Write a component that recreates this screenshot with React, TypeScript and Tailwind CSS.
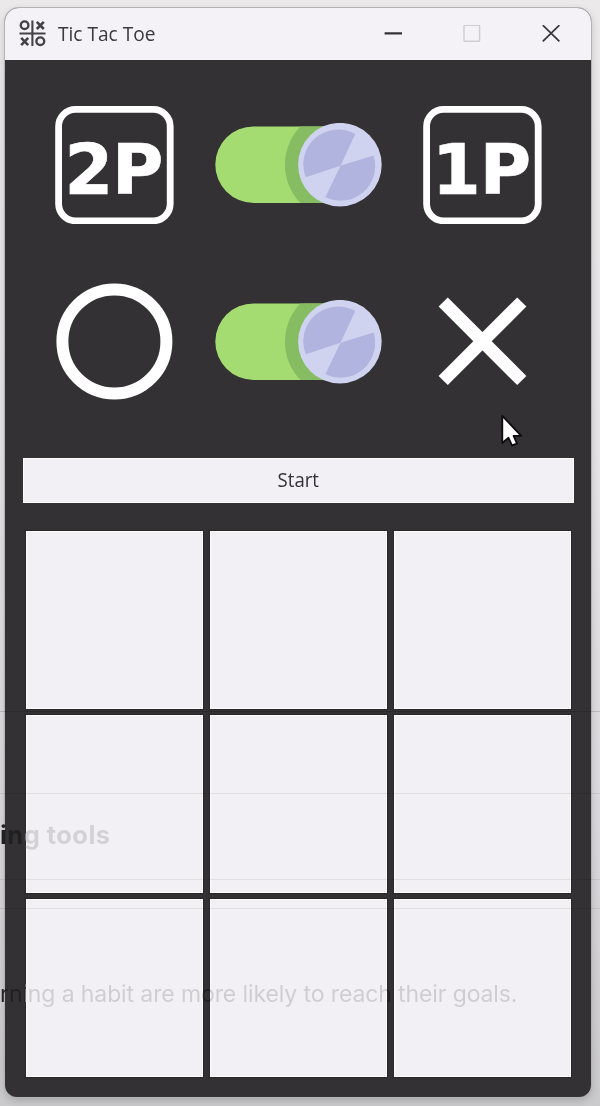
import React from "react";

function GameLogo() {
  return (
    <svg width="28" height="28" viewBox="0 0 28 28" fill="none" stroke="#444246" strokeWidth="2.4">
      <path d="M14.4 0.5V26M1.5 13.5H27.5" strokeWidth="2.1" />
      <ellipse cx="6.6" cy="5.2" rx="3.8" ry="3.8" />
      <ellipse cx="22.3" cy="21.2" rx="3.9" ry="3.8" />
      <path d="M18.8 1.8l7 7.2M25.8 1.8l-7 7.2M3.2 17.9l7 7.2M10.2 17.9l-7 7.2" strokeWidth="2.6" />
    </svg>
  );
}

function TitleBar() {
  return (
    <header className="flex h-[52px] shrink-0 items-center bg-[#f4f2f6] pl-[13px]">
      <GameLogo />
      <h1 className="ml-[12px] w-[300px] origin-left scale-x-[0.955] whitespace-nowrap text-[20px] leading-[24px] text-[#3b393e]">
        Tic Tac Toe
      </h1>
      <div className="ml-auto flex items-center gap-[61px] pr-[31px]">
        <svg width="18" height="18" viewBox="0 0 18 18">
          <path d="M0.6 8.4H18" stroke="#343236" strokeWidth="2.2" />
        </svg>
        <svg width="18" height="18" viewBox="0 0 18 18">
          <rect x="1" y="0.2" width="15.6" height="16" rx="0.8" fill="none" stroke="#cfcdd1" strokeWidth="1.4" />
        </svg>
        <svg width="18" height="18" viewBox="0 0 18 18">
          <path d="M0.8 0.2L17.4 16.4M17.4 0.2L0.8 16.4" stroke="#39373b" strokeWidth="1.8" />
        </svg>
      </div>
    </header>
  );
}

function PlayerBadge({ label, glyphX }: { label: string; glyphX: string }) {
  return (
    <svg width="119" height="118" viewBox="0 0 119 118">
      <rect x="3.6" y="3.4" width="111.6" height="111.4" rx="17" fill="none" stroke="#fff" strokeWidth="6.8" />
      <text
        x={glyphX}
        y="88"
        fill="#fff"
        stroke="#fff"
        strokeWidth="0.7"
        fontSize="70"
        fontWeight="700"
        fontFamily="DejaVu Sans, sans-serif"
      >
        {label}
      </text>
    </svg>
  );
}

function Toggle({ id }: { id: string }) {
  return (
    <svg width="167" height="84" viewBox="0 0 167 84">
      <clipPath id={id}>
        <rect x="0.3" y="3.4" width="160" height="76.6" rx="38.3" />
      </clipPath>
      <rect x="0.3" y="3.4" width="160" height="76.6" rx="38.3" fill="#a5dc72" />
      <circle cx="124.9" cy="41.7" r="55" fill="#87bd62" clipPath={"url(#" + id + ")"} />
      <circle cx="124.9" cy="41.7" r="41.8" fill="#d0d3f0" />
      <path d="M125.5 42.7L140.3 11A34.8 34.8 0 0 0 90.8 54.2Z" fill="#b1b4df" />
      <path d="M125.5 42.7L158.6 32.5A34.8 34.8 0 0 1 110.3 74.2Z" fill="#b1b4df" />
    </svg>
  );
}

function Nought() {
  return (
    <svg width="118" height="118" viewBox="0 0 118 118">
      <circle cx="59.4" cy="58.4" r="52" fill="none" stroke="#fff" strokeWidth="12" />
    </svg>
  );
}

function Cross() {
  return (
    <svg width="118" height="118" viewBox="0 0 118 118">
      <path d="M20.2 19L98.8 97.5M98.8 19L20.2 97.5" stroke="#fff" strokeWidth="13" />
    </svg>
  );
}

function Pointer() {
  return (
    <svg className="absolute left-[500px] top-[413px]" width="24" height="36" viewBox="0 0 24 36">
      <path
        d="M2.3 2.8V30L8.5 24.8L12 32.4L17 30.6L13.6 22.8H21.2Z"
        fill="#fff"
        stroke="#0c0b0e"
        strokeWidth="1.8"
        strokeLinejoin="round"
      />
    </svg>
  );
}

function BackgroundPage() {
  return (
    <div className="pointer-events-none absolute inset-0 overflow-hidden">
      <div className="absolute top-[711px] h-px w-full bg-black/15" />
      <div className="absolute top-[793px] h-px w-full bg-black/[0.07]" />
      <div className="absolute top-[879px] h-px w-full bg-black/[0.07]" />
      <div className="absolute top-[908px] h-px w-full bg-black/[0.07]" />
      <p className="absolute left-0 top-[818px] whitespace-nowrap bg-[linear-gradient(90deg,#202022_0,#202022_25px,#d3d1d5_26px)] bg-clip-text font-['Inter'] text-[25.5px] font-bold leading-[34px] tracking-[0.45px] text-transparent">
        ing tools
      </p>
      <p className="absolute left-0 top-[978px] whitespace-nowrap bg-[linear-gradient(90deg,#202022_0,#202022_25px,#cfcdd1_26px,#cfcdd1_203px,#202022_203px,#202022_210px,#cfcdd1_210px,#cfcdd1_387px,#202022_387px,#202022_394px,#cfcdd1_394px)] bg-clip-text font-['Inter'] text-[23px] leading-[32px] tracking-[-0.11px] text-transparent">
        rning a habit are more likely to reach their goals.
      </p>
    </div>
  );
}

export default function App() {
  return (
    <div className="relative h-[1106px] w-[600px] overflow-hidden bg-[linear-gradient(180deg,#ebe9e9_0%,#e7e5e7_40%,#dad8dc_75%,#cac9cb_100%)] pl-[5px] pt-2 font-['Open_Sans','Noto_Sans',sans-serif]">
      <main className="flex h-[1089px] w-[586px] flex-col overflow-hidden rounded-t-[14px] rounded-b-[12px] bg-[#333134] shadow-[0_0_0_1px_#b5b3b6,0_3px_9px_rgba(0,0,0,0.2)]">
        <TitleBar />
        <section className="grid grid-cols-[119px_167px_119px] items-center gap-x-[41px] gap-y-[59px] pl-[50px] pt-[46px]">
          <PlayerBadge label="2P" glyphX="9.5 57" />
          <Toggle id="mode-track" />
          <PlayerBadge label="1P" glyphX="9 56.7" />
          <Nought />
          <Toggle id="symbol-track" />
          <Cross />
        </section>
        <button className="ml-[18px] mt-[57px] flex h-[45px] w-[551px] shrink-0 items-center justify-center border border-[#fdfdfd] bg-[#f2f0f4] pb-[2px] text-[20px] leading-[24px] text-[#343238]">
          <span className="scale-x-[0.93]">Start</span>
        </button>
        <section className="ml-[21px] mt-[28px] grid grid-cols-[177px_177px_177px] grid-rows-[178px_178px_178px] gap-x-[7px] gap-y-[6px]">
          {Array.from({ length: 9 }, (_, i) => (
            <div key={i} className="border border-[#fdfdfd] bg-[#f2f0f4] outline outline-1 outline-[#29272a]" />
          ))}
        </section>
      </main>
      <BackgroundPage />
      <Pointer />
    </div>
  );
}
